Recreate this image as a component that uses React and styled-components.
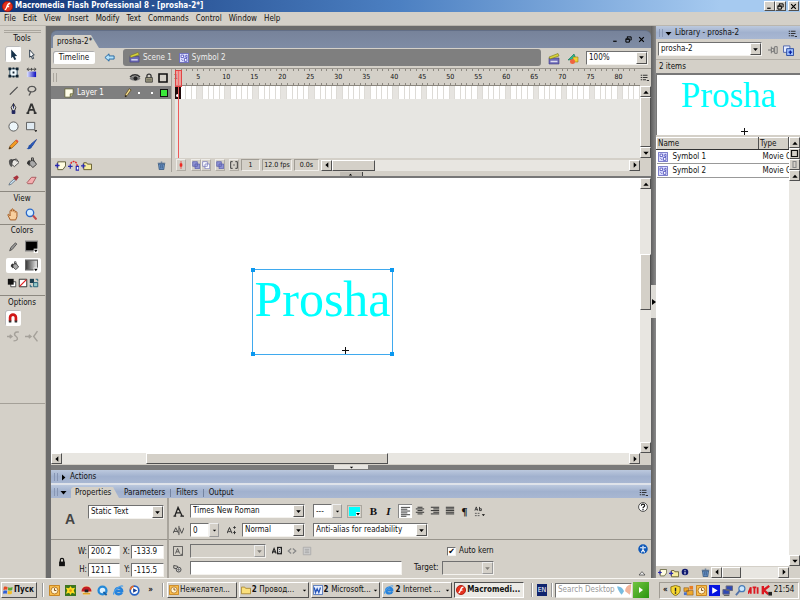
import React from "react";
import styled, { createGlobalStyle, css } from "styled-components";

const GlobalStyle = createGlobalStyle`
  * { box-sizing: border-box; }
  body { margin: 0; background: #d4d0c8; }
  body, button, input, select, table {
    font-family: "DejaVu Sans Condensed", "DejaVu Sans", sans-serif;
    font-size: 8px;
    line-height: 10px;
    color: #111;
  }
  button, input, select { margin: 0; padding: 0; border: 0; border-radius: 0; background: none; outline: 0; }
  svg { display: block; flex: none; }
  a { color: inherit; text-decoration: none; }
`;

const raised = css`
  background: #d4d0c8;
  border: 1px solid;
  border-color: #fff #505050 #505050 #fff;
`;
const sunken = css`
  border: 1px solid;
  border-color: #707070 #f4f2ee #f4f2ee #707070;
`;

const Page = styled.div`
  display: flex;
  flex-direction: column;
  min-height: 100vh;
  white-space: nowrap;
  background: #d4d0c8;
`;

/* ---------- window chrome ---------- */

const TitleBar = styled.header`
  display: flex;
  align-items: center;
  height: 12px;
  padding: 0 1px 0 2px;
  gap: 2px;
  color: #fff;
  background: linear-gradient(90deg, #123577, #4c80c2 50%, #a6caf0 90%);
`;
const TitleText = styled.h1`
  flex: 1;
  margin: 0;
  font-size: 8px;
  line-height: 12px;
  font-weight: 700;
`;
const WindowButtons = styled.div`
  display: flex;
  button:last-child { margin-left: 2px; }
`;
const WindowButton = styled.button`
  ${raised}
  width: 11px;
  height: 10px;
  display: grid;
  place-items: center;
`;
const MenuBar = styled.nav`
  display: flex;
  align-items: center;
  height: 14px;
  padding-left: 4px;
  gap: 7px;
  border-bottom: 1px solid #bab6ae;
`;

const Workspace = styled.div`
  flex: 1;
  display: flex;
  background: #6c6c6c;
`;

/* ---------- tools ---------- */

const Tools = styled.aside`
  width: 46px;
  padding-top: 4px;
  background: #d4d0c8;
  border-right: 1px solid #b8b4ac;
`;
const GripLine = styled.div`
  height: 3px;
  margin: 0 4px;
  border-top: 1px solid #aaa69e;
  border-bottom: 1px solid #aaa69e;
`;
const ToolHeading = styled.h2`
  margin: 0;
  padding-top: ${(p) => p.$pad || 1}px;
  height: ${(p) => (p.$pad || 1) + 11}px;
  width: 44px;
  font-size: 8px;
  line-height: 10px;
  font-weight: 400;
  text-align: center;
`;
const ToolGrid = styled.div`
  display: grid;
  grid-template-columns: 18px 18px;
  grid-auto-rows: ${(p) => p.$row || 18}px;
  padding: 0 0 ${(p) => p.$bottom || 2}px 4px;
  ${(p) => p.$rule && "border-bottom: 1px solid #8c8880;"}
`;
const ToolButton = styled.button`
  display: grid;
  place-items: center;
  margin: 1px;
  ${(p) => p.$on && "background: #fff; border-radius: 2px; box-shadow: inset 1px 1px #bbb;"}
`;
const FillRow = styled.div`
  grid-column: 1 / 3;
  display: grid;
  grid-template-columns: 17px 17px;
  margin: 2px -1px 2px 2px;
  background: #fff;
  border-radius: 2px;
  button { margin: 0; }
`;
const MiniRow = styled.div`
  display: flex;
  gap: 1px;
  padding: 2px 0 7px 7px;
  border-bottom: 1px solid #8c8880;
`;
const MiniButton = styled.button`
  width: 10px;
  height: 10px;
`;
const ToolsEnd = styled.div`
  height: 57px;
  border-bottom: 1px solid #a4a098;
`;

/* ---------- document ---------- */

const Center = styled.main`
  flex: 1;
  min-width: 0;
  display: flex;
  flex-direction: column;
  padding: 4px 0 0 5px;
`;
const DocHead = styled.div`
  display: flex;
  align-items: flex-end;
  height: 18px;
  padding: 0 5px 0 2px;
  border-radius: 6px 6px 0 0;
  border-top: 1px solid #626e86;
  background: linear-gradient(#77839a, #7f8ca5);
`;
const DocTab = styled.div`
  height: 13px;
  width: 46px;
  padding: 2px 0 0 4px;
  background: #d4d0c8;
  clip-path: polygon(0 2px, 2px 0, 38px 0, 46px 100%, 0 100%);
`;
const DocButtons = styled.div`
  display: flex;
  gap: 4px;
  margin-left: auto;
  padding-bottom: 4px;
`;
const PlainButton = styled.button`
  width: ${(p) => p.$w || 9}px;
  height: ${(p) => p.$h || 9}px;
  display: grid;
  place-items: center;
`;
const EditBar = styled.div`
  display: flex;
  align-items: center;
  gap: 7px;
  height: 21px;
  padding: 0 3px 1px 2px;
  background: #d4d0c8;
  border-bottom: 1px solid #9a968e;
`;
const TimelineButton = styled.button`
  width: 42px;
  height: 13px;
  background: #fff;
  border-radius: 2px;
  box-shadow: inset 1px 1px #aaa;
`;
const Crumbs = styled.nav`
  flex: 1;
  display: flex;
  align-items: center;
  gap: 7px;
  height: 17px;
  padding-left: 6px;
  border-radius: 3px;
  color: #eee;
  background: #7f7f7f;
  a { display: flex; align-items: center; gap: 3px; }
`;

const SelectBox = styled.span`
  ${sunken}
  display: flex;
  width: ${(p) => p.$w}px;
  height: 14px;
  background: ${(p) => (p.$off ? "#d4d0c8" : "#fff")};
  select {
    flex: 1;
    min-width: 0;
    padding-left: 2px;
    appearance: none;
  }
`;
const DropArrow = styled.span`
  ${raised}
  width: 11px;
  height: 12px;
  display: grid;
  place-items: center;
  ${(p) => p.$off && "border-color: #eee #999 #999 #eee; svg { opacity: 0.4; }"}
`;

/* ---------- timeline ---------- */

const Timeline = styled.section`
  display: flex;
  background: #d4d0c8;
`;
const Layers = styled.div`
  width: 121px;
  border-right: 1px solid #a6a29a;
`;
const LayerHead = styled.div`
  display: flex;
  align-items: center;
  justify-content: flex-end;
  gap: 3px;
  height: 17px;
  padding-right: 2px;
`;
const HeadGrip = styled.span`
  width: 4px;
  height: 9px;
  margin: 0 auto 0 2px;
  border: solid #aaa69e;
  border-width: 0 1px;
`;
const LayerRow = styled.div`
  display: flex;
  align-items: center;
  height: 13px;
  padding: 0 3px 0 13px;
  color: #fff;
  background: #7f7f7f;
  span { flex: 1; padding-left: 3px; }
`;
const Dot = styled.i`
  width: 2px;
  height: 2px;
  margin: 0 6px 0 5px;
  background: #fff;
`;
const Swatch = styled.i`
  width: 8px;
  height: 8px;
  margin-left: 1px;
  background: #3be73b;
  border: 1px solid #111;
`;
const Empty = styled.div`
  height: ${(p) => p.$h}px;
  background: #e7e6e2;
`;
const LayerFoot = styled.div`
  display: flex;
  align-items: center;
  gap: 1px;
  height: 14px;
  padding: 0 4px 0 3px;
  button:last-child { margin-left: auto; }
`;
const Frames = styled.div`
  flex: 1;
  min-width: 0;
  margin-left: 3px;
  position: relative;
`;
const Ruler = styled.div`
  display: grid;
  grid-template-columns: repeat(83, 1fr);
  height: 17px;
  border-bottom: 1px solid #8a867e;
`;
const Tick = styled.span`
  display: flex;
  justify-content: center;
  align-items: center;
  min-width: 0;
  padding-right: 4px;
  overflow: visible;
  font-size: 7px;
  background:
    linear-gradient(#8c8880, #8c8880) 0 0 / 1px 2px no-repeat,
    linear-gradient(#8c8880, #8c8880) 0 100% / 1px 2px no-repeat;
`;
const FrameRow = styled.div`
  display: grid;
  grid-template-columns: repeat(83, 1fr);
  height: 13px;
`;
const Frame = styled.span`
  background: ${(p) => (p.$fifth ? "#e6e4e0" : "#fff")};
  border-right: 1px solid #dddbd6;
`;
const KeyFrame = styled.span`
  display: grid;
  place-items: end center;
  background: #1d0909;
  padding-bottom: 2px;
  i { width: 3px; height: 3px; border-radius: 2px; background: #fff; }
`;
const Playhead = styled.div`
  position: absolute;
  left: 0;
  top: 1px;
  bottom: 14px;
  width: 7px;
  background: linear-gradient(#ee5a5a, #ee5a5a) 3px 0 / 1px 100% no-repeat;
  &::before {
    content: "";
    display: block;
    height: 15px;
    border: 1px solid #e24444;
    background: rgba(255, 120, 120, 0.55);
  }
`;
const FrameFoot = styled.div`
  display: flex;
  align-items: center;
  height: 14px;
`;
const FootButton = styled.button`
  width: 10px;
  height: 12px;
  margin-left: ${(p) => p.$gap || 0}px;
  display: grid;
  place-items: center;
  border: 1px solid;
  border-color: #eeece8 #b0aca4 #b0aca4 #eeece8;
`;
const Readout = styled.output`
  width: ${(p) => p.$w}px;
  height: 12px;
  margin-left: 2px;
  font-size: 7px;
  text-align: center;
  border: 1px solid;
  border-color: #a09c94 #f0eeea #f0eeea #a09c94;
`;
const Splitter = styled.div`
  display: flex;
  justify-content: center;
  align-items: flex-end;
  height: 6px;
  background: ${(p) => (p.$dark ? "#7a7a7a" : "#d4d0c8")};
  border-bottom: 2px solid #777;
  ${(p) => p.$dark && "height: 5px; border: 0; align-items: flex-start;"}
`;
const SplitterTab = styled.button`
  width: 34px;
  height: 4px;
  display: grid;
  place-items: center;
  background: #e6e4e0;
  ${(p) => !p.$wide && "width: 23px; border-right: 1px solid #444; background: #bfbbb3;"}
`;

/* ---------- scrollbars ---------- */

const Scroll = styled.div`
  display: flex;
  flex: ${(p) => (p.$fixed ? "none" : 1)};
  flex-direction: ${(p) => (p.$v ? "column" : "row")};
  ${(p) => (p.$v ? "width: 11px;" : "height: 11px;")}
  background: #e8e6e1;
`;
const ScrollArrow = styled.button`
  ${raised}
  width: 11px;
  height: 11px;
  flex: none;
  display: grid;
  place-items: center;
`;
const Track = styled.span`
  flex: ${(p) => p.$n};
`;
const Thumb = styled.span`
  ${raised}
  flex: ${(p) => p.$n};
`;

/* ---------- stage ---------- */

const StageGrid = styled.section`
  flex: 1;
  display: grid;
  grid-template-columns: 1fr 11px;
  grid-template-rows: 1fr 12px;
  background: #d4d0c8;
`;
const Stage = styled.div`
  position: relative;
  min-height: 220px;
  background: #fff;
  overflow: hidden;
`;
const Selected = styled.div`
  position: absolute;
  left: 201px;
  top: 91px;
  width: 141px;
  height: 86px;
  border: 1px solid #3fa9ee;
  font-family: "Liberation Serif", serif;
  font-size: 50px;
  line-height: 58px;
  text-align: center;
  color: #00ffff;
`;
const Handle = styled.i`
  position: absolute;
  width: 4px;
  height: 4px;
  background: #0a98f0;
  ${(p) => p.$x}: -2px;
  ${(p) => p.$y}: -2px;
`;
const Cross = styled.svg`
  position: absolute;
  right: ${(p) => p.$right}px;
  bottom: 0;
`;
const SideHandle = styled.div`
  width: 5px;
  display: flex;
  flex-direction: column;
  justify-content: center;
  padding-bottom: 1px;
  background: linear-gradient(90deg, #606060, #8a8a8a);
`;
const SideTab = styled.button`
  width: 5px;
  height: 33px;
  display: grid;
  place-items: center;
  background: #dedcd7;
`;

/* ---------- panels ---------- */

const PanelHead = styled.div`
  display: flex;
  align-items: center;
  gap: 1px;
  height: 13px;
  padding: 1px 3px 0;
  background: linear-gradient(#bcc9de, #a1b1ce 50%, #a8b7d2);
`;
const Grip = styled.span`
  width: 4px;
  height: 8px;
  border: solid #8796b4;
  border-width: 0 1px;
`;
const ActionsPanel = styled.section`
  border-bottom: 2px solid #dfe3ea;
`;
const TabList = styled.div`
  display: flex;
  align-self: flex-end;
  flex: 1;
`;
const PanelTitle = styled.div`
  flex: 1;
  padding-left: 1px;
`;
const TabButton = styled.button`
  height: 11px;
  padding: 0 5px;
  ${(p) =>
    p.$on &&
    `background: #d4d0c8; width: 48px; padding: 0 4px; margin-left: 2px; text-align: left;
    clip-path: polygon(0 2px, 2px 0, 42px 0, 48px 100%, 0 100%);`}
`;
const TabRule = styled.i`
  width: 1px;
  height: 8px;
  margin-top: 2px;
  background: #7483a0;
`;
const Properties = styled.div`
  display: grid;
  grid-template-columns: 118px 1fr;
  grid-template-rows: 42px 38px;
  background: #d4d0c8;
`;
const Cell = styled.div`
  display: flex;
  gap: 5px;
  ${(p) => p.$top && "border-bottom: 1px solid #98948c;"}
  ${(p) => p.$left && "border-right: 2px solid #a8a49c;"}
`;
const Kind = styled.strong`
  width: 32px;
  padding: 14px 0 0 14px;
  font-size: 14px;
  line-height: 14px;
  font-family: "Liberation Sans", sans-serif;
  color: #444;
`;
const TypeWrap = styled.div`
  padding-top: 7px;
`;
const Lines = styled.div`
  flex: 1;
  display: flex;
  flex-direction: column;
  gap: ${(p) => p.$gap}px;
  padding: ${(p) => p.$pad}px 0 0 4px;
`;
const Line = styled.div`
  display: flex;
  align-items: center;
  height: 14px;
  > svg:first-child { margin-right: 5px; }
`;
const Spacer = styled.span`
  width: ${(p) => p.$w}px;
`;
const PinColumn = styled.div`
  display: flex;
  flex-direction: column;
  justify-content: space-between;
  padding: 4px 3px 1px 0;
`;
const TextInput = styled.input`
  ${sunken}
  width: ${(p) => p.$w}px;
  height: 14px;
  padding-left: 2px;
  background: #fff;
`;
const StepButton = styled.button`
  ${raised}
  border-color: #eee #999 #999 #eee;
  width: 10px;
  height: 14px;
  display: grid;
  place-items: center;
`;
const FormatButton = styled.button`
  width: 15px;
  height: 14px;
  display: grid;
  place-items: center;
  font-family: "Liberation Serif", serif;
  font-size: 11px;
  line-height: 12px;
  font-weight: 700;
  font-style: ${(p) => (p.$italic ? "italic" : "normal")};
  ${(p) => p.$on && "width: 14px; background: #fff; box-shadow: inset 1px 1px #888;"}
`;
const ColorButton = styled.button`
  width: 15px;
  height: 13px;
  padding: 1px;
  border: 1px solid #aaa69e;
`;
const SizeFields = styled.div`
  display: grid;
  grid-template-columns: 11px 32px 11px 33px;
  row-gap: 3px;
  align-items: center;
  padding: 4px 0 0 5px;
  label { text-align: right; padding-right: 1px; }
`;
const Lock = styled.div`
  padding: 17px 0 0 6px;
`;
const CheckLabel = styled.label`
  display: flex;
  align-items: center;
  gap: 3px;
  input {
    ${sunken}
    appearance: none;
    display: grid;
    place-items: center;
    width: 9px;
    height: 9px;
    background: #fff;
  }
  input:checked::before {
    content: "✔";
    font: 700 8px/8px "DejaVu Sans", sans-serif;
    color: #000;
  }
`;

/* ---------- library ---------- */

const Library = styled.aside`
  width: 144px;
  display: flex;
  flex-direction: column;
  background: #d4d0c8;
`;
const LibraryPick = styled.div`
  display: flex;
  align-items: center;
  gap: 6px;
  height: 21px;
  padding-left: 2px;
  border-bottom: 1px solid #b4b0a8;
`;
const Count = styled.div`
  height: 13px;
  padding: 2px 3px;
`;
const Preview = styled.div`
  position: relative;
  height: 62px;
  border-top: 2px solid #777;
  border-left: 1px solid #777;
  background: #fff;
  font-family: "Liberation Serif", serif;
  font-size: 35px;
  line-height: 41px;
  text-align: center;
  color: #00ffff;
`;
const LibraryBody = styled.div`
  flex: 1;
  display: flex;
  margin-top: 2px;
`;
const TableWrap = styled.div`
  flex: 1;
  overflow: hidden;
  background: #fff;
`;
const ItemTable = styled.table`
  width: 100%;
  table-layout: fixed;
  border-collapse: collapse;
  th {
    ${raised}
    border-bottom-color: #333;
    height: 12px;
    padding: 0 1px;
    font-weight: 400;
    text-align: left;
  }
  th:last-child { width: 30px; }
  td {
    height: 14px;
    padding: 0 0 0 1px;
    border-bottom: 1px solid #999;
    overflow: hidden;
  }
  td:last-child { padding-left: 4px; }
`;
const ItemName = styled.span`
  display: flex;
  align-items: center;
  gap: 5px;
`;
const LibraryFoot = styled.div`
  display: flex;
  align-items: center;
  height: 12px;
  padding-left: 1px;
`;

/* ---------- taskbar ---------- */

const Taskbar = styled.footer`
  display: flex;
  align-items: center;
  height: 22px;
  padding: 1px 1px 0;
  border-top: 1px solid #f8f6f2;
  background: #d4d0c8;
`;
const StartButton = styled.button`
  ${raised}
  display: flex;
  align-items: center;
  gap: 1px;
  width: 36px;
  height: 16px;
  padding-left: 1px;
  font-weight: 700;
`;
const Divider = styled.i`
  width: 2px;
  height: 14px;
  margin: 0 ${(p) => p.$r || 3}px 0 ${(p) => p.$l || 3}px;
  border-left: 1px solid #999;
  border-right: 1px solid #fff;
`;
const Quick = styled.div`
  display: flex;
  gap: 4px;
  width: 109px;
  align-items: center;
  b { margin-left: auto; padding-right: 4px; }
`;
const TaskList = styled.div`
  flex: 1;
  min-width: 0;
  display: flex;
  gap: 2px;
`;
const Task = styled.button`
  ${raised}
  flex: 1;
  min-width: 0;
  display: flex;
  align-items: center;
  gap: 1px;
  height: 16px;
  padding: 0 1px;
  text-align: left;
  span { flex: 1; min-width: 0; overflow: hidden; }
  ${(p) =>
    p.$on &&
    "background: #ebe9e4; border-color: #505050 #fff #fff #505050; font-weight: 700;"}
`;
const Lang = styled.span`
  width: 10px;
  height: 12px;
  margin-left: 3px;
  color: #fff;
  background: #10246e;
  font-size: 7px;
  line-height: 12px;
  text-align: center;
`;
const Search = styled.label`
  ${sunken}
  display: flex;
  align-items: center;
  width: 77px;
  height: 15px;
  background: #fff;
  input { width: 61px; padding-left: 2px; }
  input::placeholder { color: #999; opacity: 1; }
`;
const Go = styled.button`
  width: 16px;
  height: 16px;
  margin: 0 10px 0 1px;
  display: grid;
  place-items: center;
  background: linear-gradient(135deg, #72c440, #2a9410);
`;
const Tray = styled.div`
  ${sunken}
  display: flex;
  align-items: center;
  gap: 2px;
  width: 140px;
  height: 17px;
  padding: 0 5px 0 3px;
  border-color: #a09c94 #fff #fff #a09c94;
  time { margin-left: auto; }
`;

/* ---------- drawings ---------- */

const shapes = {
  flash: (
    <>
      <circle cx="6" cy="6" r="5.5" fill="#e6321e" stroke="#a81408" />
      <path d="M9 2.5C6 2.5 5.8 5 5 7.2 4.5 8.8 4 9.4 3 9.5M5.3 6h2.5" stroke="#fff" strokeWidth="1.5" fill="none" />
    </>
  ),
  min: <path d="M2 9h6" stroke="#000" strokeWidth="2" />,
  restore: <path d="M4 1.5h6.5V7H9M4 1v3M1.5 5.5h6v5h-6zM1 5h7" stroke="#000" strokeWidth="1.7" fill="none" />,
  close: <path d="M2 2l8 8M10 2l-8 8" stroke="#000" strokeWidth="2" />,
  up: <path d="M6 4l4 4.5H2z" fill="#000" />,
  down: <path d="M6 8.5L2 4h8z" fill="#000" />,
  left: <path d="M3.5 6l4.5-4v8z" fill="#000" />,
  right: <path d="M8.5 6L4 2v8z" fill="#000" />,
  menu: <path d="M1 3h2M1 6h2M1 9h2M4 3h6M4 6h6M4 9h4M9 10h3" stroke="#222" strokeWidth="1.2" />,
  arrow: <path d="M3.500.5l6.500 7-2.800.3 1.800 3.400-2 .8L5.300 8.500 3.500 10z" fill="#17324a" />,
  subarrow: <path d="M4 1l5 5.6-2 .3L8.300 10.300l-1.200.6L5.600 7.600 4 9z" fill="#fff" stroke="#243446" />,
  free: (
    <>
      <path d="M2 2h8v8H2z" fill="#f4fbff" stroke="#27495e" />
      <path d="M.5.5h3v3h-3zM8.5.5h3v3h-3zM.5 8.5h3v3h-3zM8.5 8.5h3v3h-3zM5 .5h2v2H5zM5 9.500h2v2H5zM5 5h2v2H5z" fill="#102230" />
    </>
  ),
  gradTool: (
    <>
      <defs>
        <linearGradient id="blues">
          <stop offset="0" stopColor="#dfe3ff" />
          <stop offset="1" stopColor="#0a0cc0" />
        </linearGradient>
      </defs>
      <path d="M1 5h10v6H1z" fill="url(#blues)" />
      <path d="M1 2.500h10M3 1L1 2.500 3 4M9 1l2 1.500L9 4M6 1v3" stroke="#444" fill="none" />
    </>
  ),
  line: <path d="M2 10.500l8.500-8.500" stroke="#4e4e4e" strokeWidth="1.4" />,
  lasso: <path d="M3.500 7C1 5 2.500 1.500 6.500 1.500S12 5 9 6.800C7 8 4 7.500 3.500 6.500M4 7c2 1 0 2.500-.7 4.500" stroke="#555" strokeWidth="1.500" fill="none" />,
  pen: (
    <>
      <path d="M6 .5L3.500 5 5 9h2l1.500-4z" fill="#ddd" stroke="#222" />
      <path d="M6 1v5M4.500 8.500h3v3h-3z" stroke="#20255e" fill="#20255e" />
    </>
  ),
  type: <path d="M2 11L5.500 1.500h1L10 11M3 7.500h6M.5 11h3M8.500 11h3" stroke="#333" strokeWidth="1.900" fill="none" />,
  oval: <circle cx="6" cy="6" r="5" fill="#edf6fa" stroke="#555" />,
  rect: (
    <>
      <path d="M.5 1.500h9v8h-9z" fill="#dfeaf2" stroke="#555" />
      <path d="M9 10h3.500l-1.700 2z" fill="#000" />
    </>
  ),
  pencil: (
    <>
      <path d="M1 11l1.200-3.500 6-6 2.400 2.300-6.200 6z" fill="#f39a22" stroke="#8b5212" strokeWidth=".7" />
      <path d="M8 1.500L9.500.5l2 2-1 1.500z" fill="#e4563c" />
      <path d="M1 11l1-2.500L3.700 10z" fill="#222" />
    </>
  ),
  layerPencil: (
    <>
      <path d="M2.500 10.500L3 7.500 7.500.8l2.200 1.500L5 9z" fill="#f2dc8c" stroke="#5a451c" strokeWidth=".9" />
      <path d="M2.500 11L3 8.500 4.800 9.500z" fill="#111" />
    </>
  ),
  brush: (
    <>
      <path d="M11.500.5L5.500 5.500 7 7.500z" fill="#2c62d4" stroke="#1c3c8a" strokeWidth=".8" />
      <path d="M5.500 5.500L3 7c-.5 2-1 3-2.500 4C3.500 11.500 6 11 7 8z" fill="#2450a8" />
    </>
  ),
  ink: (
    <>
      <path d="M1 5c0-2 2-3.500 4-2.500l1 3.500-2 5C2 10 1 8 1 5z" fill="#555" />
      <path d="M5 4l4-2 3 4-5 4.500L4 8z" fill="#e8e6e2" stroke="#444" />
      <path d="M4 5c1-3 4-3 6 0" stroke="#333" fill="none" />
    </>
  ),
  bucket: (
    <>
      <path d="M1 7c0-2 2-4 3.500-3.500L4 10z" fill="#333" />
      <path d="M4 5l4-2 3.500 5-4 3.500L4 8z" fill="#aaa" stroke="#333" />
      <path d="M6 4V1h2v4" stroke="#333" fill="none" />
    </>
  ),
  dropper: (
    <>
      <path d="M1 11l1-2.500 4.500-4 1.500 1.500-4.500 4z" fill="#cbe3f4" stroke="#567" strokeWidth=".8" />
      <path d="M5.500 3L9 6.300 11.800 2.500 9.800.3z" fill="#a8323c" />
    </>
  ),
  eraser: <path d="M1 8.500L6 2.500h5L7 9.500H2z" fill="#f5aeb0" stroke="#a5585c" />,
  hand: <path d="M3 11L.8 6.500c0-1 1-1 2 .8V3c0-1.200 1.400-1.200 1.500 0V1.500c0-1 1.500-1 1.500 0V3c0-1.300 1.700-1.300 1.700 0v1c0-1 1.700-1 1.700.2V8L8 11z" fill="#f8cf9e" stroke="#a55c22" strokeWidth=".9" />,
  zoom: (
    <>
      <circle cx="5" cy="4.800" r="3.700" fill="#d2ecff" stroke="#2b68c8" strokeWidth="1.300" />
      <path d="M8 7.500l3.500 4" stroke="#c44848" strokeWidth="2" />
    </>
  ),
  stroke: <path d="M2 10.500l1.500-4L9 1l1.500 1.500L5 9z" fill="#999" stroke="#444" />,
  black: (
    <>
      <path d="M.5 1h11v9H.5z" fill="#000" stroke="#888" />
      <path d="M8 8h4v4H8z" fill="#fff" />
      <path d="M8.300 9h3.400L10 11.200z" fill="#000" />
    </>
  ),
  fade: (
    <>
      <defs>
        <linearGradient id="fade">
          <stop offset="0" stopColor="#333" />
          <stop offset="1" stopColor="#eee" />
        </linearGradient>
      </defs>
      <path d="M.5 1h11v9H.5z" fill="url(#fade)" stroke="#666" />
      <path d="M8 8h4v4H8z" fill="#fff" />
      <path d="M8.300 9h3.400L10 11.200z" fill="#000" />
    </>
  ),
  bw: (
    <>
      <path d="M4.500 4.500h6v6h-6z" fill="#fff" stroke="#333" />
      <path d="M1 1h7v7H1z" fill="#111" />
    </>
  ),
  none: (
    <>
      <path d="M1.500 1.500h9v9h-9z" fill="#fff" stroke="#111" />
      <path d="M2 10l8-8" stroke="#e02020" strokeWidth="1.500" />
    </>
  ),
  swap: (
    <>
      <path d="M1 1h5v5H1z" fill="#1c3e4e" />
      <path d="M5.500 5.500h5v5h-5zM8 1.500h2.500V4M4 10.500H1.500V8" fill="#9cc" stroke="#14506a" />
    </>
  ),
  magnet: (
    <>
      <path d="M2.500 10V5.500a3.500 3.500 0 017 0V10" stroke="#d01818" strokeWidth="3.200" fill="none" />
      <path d="M1 9h3v2.500H1zM8 9h3v2.500H8z" fill="#333" />
    </>
  ),
  smooth: <path d="M0 6h4M2.500 4.500L4.500 6 2.500 7.500M11 2c-4-1-5 2-3 3.500S11 10 6 10" stroke="#a5a19a" strokeWidth="1.300" fill="none" />,
  straight: <path d="M0 6h5M3.500 4.500L5.500 6l-2 1.500M11.500 1L8 6l3.500 4.500" stroke="#a5a19a" strokeWidth="1.300" fill="none" />,
  back: <path d="M1 6l4.500-4v2.300H11v3.400H5.500V10z" fill="#b4e2fa" stroke="#2064a0" />,
  scene: (
    <>
      <path d="M1 5h10v6H1z" fill="#6d6ab8" stroke="#3d3a80" strokeWidth=".6" />
      <path d="M1 4l9-3.500 1 2.500-9 3z" fill="#d6d23c" stroke="#77741a" strokeWidth=".6" />
      <path d="M2.500 8.500h7" stroke="#dde" strokeWidth="1.500" />
    </>
  ),
  symbol: (
    <>
      <path d="M.5.500h11v11H.5z" fill="#dcdeff" stroke="#5c5ebc" />
      <path d="M2.500 2.500h3v3h-3zM7 4l2.500-1.500V6zM6.500 6.500h3V10h-3zM3 7.500l2 2" fill="#fff" stroke="#4a4cb8" />
    </>
  ),
  shapesIcon: (
    <>
      <path d="M1 7l6-6 2 5z" fill="#27b892" stroke="#126c52" strokeWidth=".6" />
      <path d="M6 4h5v5H6z" fill="#f0d230" stroke="#977d18" strokeWidth=".6" />
      <circle cx="5.500" cy="8.500" r="2.500" fill="#ef6340" />
    </>
  ),
  eye: (
    <>
      <path d="M.5 6.500C3 3 9 3 11.500 6.500 9 9.500 3 9.500.5 6.500z" fill="#777" />
      <circle cx="6.500" cy="6.500" r="2" fill="#222" />
      <path d="M1 5c3-3 7-3 10 0" stroke="#333" strokeWidth="1.300" fill="none" />
    </>
  ),
  padlock: (
    <>
      <path d="M3.500 6V3.500c0-3 5-3 5 0V6" stroke="#333" strokeWidth="1.500" fill="none" />
      <path d="M2 5.500h8V11H2z" fill="#b9b48e" stroke="#333" />
      <path d="M3 7.500h6M3 9.500h6" stroke="#555" />
    </>
  ),
  lockBlack: (
    <>
      <path d="M4 6V3.500c0-2.500 4-2.500 4 0V6" stroke="#111" strokeWidth="1.500" fill="none" />
      <path d="M2.500 5.500h7V11h-7z" fill="#111" />
    </>
  ),
  square: <path d="M2 2h8v8H2z" fill="none" stroke="#111" strokeWidth="1.600" />,
  sheet: (
    <>
      <path d="M1 1h10v6l-3.500 4H1z" fill="#fffde8" stroke="#5d5b34" />
      <path d="M11 7H7.500v4" fill="#c8c694" stroke="#5d5b34" />
    </>
  ),
  addLayer: (
    <>
      <path d="M3 2h8.500v4.500l-3 4H3z" fill="#fffde0" stroke="#55552f" />
      <path d="M0 6h5M2.500 3.500v5" stroke="#2a2ab0" strokeWidth="1.400" />
    </>
  ),
  guide: (
    <>
      <path d="M3 4c2-4 7-3 7 3" stroke="#e02828" strokeWidth="1.500" strokeDasharray="2 1" fill="none" />
      <path d="M0 7h5M2.500 4.500v5M9 7h3v4H9z" stroke="#2a2ab0" fill="#fff" strokeWidth="1.300" />
    </>
  ),
  folderAdd: (
    <>
      <path d="M3 3h3l1 1.500h4.500V10.500H3z" fill="#f6eca0" stroke="#5e5728" />
      <path d="M0 6.500h5M2.500 4v5" stroke="#2a2ab0" strokeWidth="1.400" />
    </>
  ),
  trash: (
    <>
      <path d="M2 4h8l-1 7.500H3z" fill="#6f98cc" stroke="#2b4c72" />
      <path d="M1 3h10M5 1.500h2M5 5v5M7 5v5" stroke="#3a5c88" strokeWidth="1.200" />
    </>
  ),
  marker: <path d="M6 0v12M4.500 4h3v4h-3z" stroke="#ee2a22" fill="#ee2a22" />,
  onion: <path d="M1 1h7v7H1zM4.500 4.500h7v7h-7z" fill="#8e92d4" stroke="#5256a8" />,
  onionLine: <path d="M1 1h7v7H1zM4.500 4.500h7v7h-7z" fill="#fff" stroke="#6a6eb8" />,
  brackets: <path d="M4 1H1v10h3M8 1h3v10H8M5 6h2" stroke="#333" strokeWidth="1.400" fill="none" />,
  kern: <path d="M0 9l3-6 3 6M1 7h4M6.500 1v10M7 3l2.500 6L12 3" stroke="#444" fill="none" />,
  pos: <path d="M0 10l3-7 3 7M1.500 8h3M9 1.500v3M7.500 3h3M9 7v4M7.500 9h3" stroke="#333" strokeWidth="1.200" fill="none" />,
  fontA: <path d="M2 11L5.500 1.500 10 11M3.500 7.500h5M.5 11h3M8 11h4" stroke="#222" strokeWidth="1.400" fill="none" />,
  alignL: <path d="M1 1.500h10M1 3.500h7M1 5.500h10M1 7.500h7M1 9.500h10M1 11.200h6" stroke="#333" />,
  alignC: <path d="M3 1.500h6M1 3.500h10M3 5.500h6M1 7.500h10M3 9.500h6" stroke="#333" strokeWidth="1.200" />,
  alignR: <path d="M1 1.500h10M4 3.500h7M1 5.500h10M4 7.500h7M1 9.500h10" stroke="#333" strokeWidth="1.200" />,
  alignJ: <path d="M1 1.500h10M1 3.500h10M1 5.500h10M1 7.500h10M1 9.500h10" stroke="#333" strokeWidth="1.200" />,
  format: (
    <>
      <path d="M1 5l1.500-4L4 5M2 4h2M6 1v4h2V3H6" stroke="#333" fill="none" />
      <path d="M1 8h6M1 10.500h6" stroke="#555" strokeDasharray="2 1" />
      <path d="M8.500 9H12l-1.800 2z" fill="#000" />
    </>
  ),
  selectable: <path d="M.5.500h11v11H.5zM3 9l2.500-6L8 9M4 7h3M9 10h2" fill="none" stroke="#444" />,
  link: (
    <>
      <path d="M1 2l5 1v3.500L1 5.500z" fill="none" stroke="#444" strokeWidth="1.200" />
      <circle cx="7.500" cy="7.500" r="3.200" fill="#ddd" stroke="#444" strokeWidth="1.200" />
      <path d="M5 7.500h5M7.500 5v5" stroke="#666" />
    </>
  ),
  abc: (
    <>
      <path d="M6 1h6v9H6z" fill="#222" />
      <path d="M0 9l2.500-6L5 9M1 7h3" stroke="#222" strokeWidth="1.300" fill="none" />
      <path d="M8 3h2v5H8zM8 5.500h2" stroke="#fff" fill="none" />
    </>
  ),
  html: <path d="M5 3L1.500 6 5 9M7 3l3.500 3L7 9" stroke="#888" strokeWidth="1.500" fill="none" />,
  border: <path d="M1.500 1.500h9v9h-9zM4 4h4v1H4zM4 7h4v1H4z" stroke="#aaa" fill="#ccc" />,
  narrow: <path d="M4 2h4v8H4z" stroke="#888" strokeWidth="1.400" fill="none" />,
  help: (
    <>
      <circle cx="6" cy="6" r="5.300" fill="#fff" stroke="#333" />
      <path d="M4 4.500c0-2.500 4-2.500 4 0C8 6 6 5.500 6 7.500M6 8.500v1.300" stroke="#111" strokeWidth="1.400" fill="none" />
    </>
  ),
  access: (
    <>
      <circle cx="6" cy="6" r="5.700" fill="#0f58b8" />
      <path d="M6 2v1.500M2.500 4.500h7M6 4v3l-2 3M6 7l2 3" stroke="#fff" strokeWidth="1.400" fill="none" />
    </>
  ),
  expand: <path d="M6 4l4.500 5h-9z" fill="#eee" stroke="#333" />,
  pin: <path d="M0 6h4M4 2v8M4 4h3v4H4M8 2v8h3V2z" stroke="#777" strokeWidth="1.200" fill="none" />,
  newLib: (
    <>
      <path d="M.5 1h7v7h-7z" fill="#e6edff" stroke="#4960a8" />
      <path d="M4 4h7.500v7.500H4z" fill="#9fc1ff" stroke="#24449c" />
      <path d="M6 7.800h4M8 6v4" stroke="#0820a0" strokeWidth="1.500" />
    </>
  ),
  info: (
    <>
      <circle cx="6" cy="6" r="5" fill="#101a70" />
      <path d="M6 3v1.300M6 5.500v4" stroke="#fff" strokeWidth="1.500" />
    </>
  ),
  windows: (
    <>
      <path d="M1 2.500C2.500 1.500 4 2 5.500 2.500L5 6C3.500 5 2 5.500.5 6z" fill="#e64b20" />
      <path d="M6.200 2.800C8 3.500 9.500 3.200 11.500 2.500L11 6c-2 1-3.500.5-5 .2z" fill="#56a832" />
      <path d="M.5 7c1.500-.8 3-.6 4.500 0l-.5 3.500C3 10 1.500 10 0 10.500z" fill="#2f5fd8" />
      <path d="M5.800 7.200c1.500.5 3 .6 5 0L10.500 10.500c-2 1-3.500.7-5 .2z" fill="#f4bd20" />
    </>
  ),
  clock: (
    <>
      <path d="M.5.500h11v11H.5z" fill="#f9bd4b" stroke="#c47e16" />
      <circle cx="6" cy="6" r="3.800" fill="#fff2cf" stroke="#b37422" />
      <path d="M6 3.500V6h2" stroke="#764410" fill="none" />
    </>
  ),
  flower: (
    <>
      <path d="M0 0h12v12H0z" fill="#3c751f" />
      <path d="M6 1l1.500 2.500L11 3 9.500 6 11 9.500 7.500 8.500 6 11 4.500 8.500 1 9.500 2.500 6 1 3l3.500.5z" fill="#ffdd20" />
      <circle cx="6" cy="6" r="1.500" fill="#e89a10" />
    </>
  ),
  ball: (
    <>
      <circle cx="6" cy="6" r="5.500" fill="#f0d8a8" />
      <path d="M.5 7a5.500 5.500 0 0111 0z" fill="#c41d24" />
      <path d="M4 5h4v3H4z" fill="#252020" />
      <path d="M2 9.500h8" stroke="#e0a32a" strokeWidth="1.500" />
    </>
  ),
  quicktime: (
    <>
      <circle cx="6" cy="6" r="4.300" fill="#dcf1ff" stroke="#2489d8" strokeWidth="2.500" />
      <path d="M7 7.500l3.500 3.500" stroke="#1560a8" strokeWidth="2" />
    </>
  ),
  ie: (
    <>
      <path d="M9.800 8.200C8.500 11 2.500 11 2.500 6.500S10 2 10 6.500H4" stroke="#2582dc" strokeWidth="2.600" fill="none" />
      <path d="M1 10.500C-1 8 8-1 11 1.500" stroke="#4b9fe8" strokeWidth="1.300" fill="none" />
    </>
  ),
  media: (
    <>
      <circle cx="6" cy="6" r="4.700" fill="#fff" stroke="#2463c8" strokeWidth="1.800" />
      <path d="M1.500 5A5 5 0 015 1.300" stroke="#ed6c22" strokeWidth="2" fill="none" />
      <path d="M4.500 3.500v5L9 6z" fill="#173d90" />
    </>
  ),
  folder: <path d="M.5 2.500h4l1 1.500h6v6.500H.5z" fill="#fbe07c" stroke="#a7842c" />,
  word: (
    <>
      <path d="M.5.500h11v11H.5z" fill="#e7efff" stroke="#3f68b4" />
      <path d="M1.500 3l1.500 6 2-4.500L7 9l2-6" stroke="#2454b8" strokeWidth="1.500" fill="none" />
    </>
  ),
  butterfly: (
    <>
      <path d="M0 3c4 0 5 2 6 4l-2 3C2 8 1 6 0 3z" fill="#78bce0" />
      <path d="M12 1C8 2 7 5 7 7l4 3c1-3 1-6 1-9z" fill="#f2b49a" />
    </>
  ),
  shield: (
    <>
      <path d="M6 .5L11 2v4.500C10.500 9 8 11 6 11.500 4 11 1.500 9 1 6.500V2z" fill="#f8d830" stroke="#867018" />
      <path d="M6 3v4M6 8v1.500" stroke="#222" strokeWidth="1.500" />
    </>
  ),
  people: (
    <>
      <path d="M1 3h5v4H1zM4 6h7v5H4z" fill="#eea82d" stroke="#855418" strokeWidth=".6" />
      <path d="M7 1h4v4H7z" fill="#e77d24" />
      <path d="M1 8h3v3H1z" fill="#4a72cc" />
    </>
  ),
  play: (
    <>
      <path d="M0 0h12v12H0z" fill="#0614e0" />
      <path d="M3.500 2.500v7L9.500 6z" fill="#fff" />
    </>
  ),
  network: (
    <>
      <path d="M4.500 1h7v5h-7zM1 5h7v5H1z" fill="#3049b4" stroke="#667" />
      <path d="M2 11.500h6" stroke="#555" />
    </>
  ),
  glass: (
    <>
      <circle cx="7.500" cy="4" r="3.300" fill="#cbe8ff" stroke="#477bb8" strokeWidth="1.300" />
      <path d="M5 6.500L1 11" stroke="#5474aa" strokeWidth="2" />
    </>
  ),
  ati: <path d="M0 9.500L3 2.500v7M1.500 7H3M5 2.500h4M7 2.500v7M10.500 2.500v7" stroke="#dc1820" strokeWidth="2" fill="none" />,
  kasp: (
    <>
      <path d="M2 1v9M9 1L3 5.500 8 10" stroke="#dc1820" strokeWidth="2.600" fill="none" />
      <path d="M8 7.500h4v4H8z" fill="#222" />
    </>
  ),
};

function Icon({ name, size = 11 }) {
  return (
    <svg width={size} height={size} viewBox="0 0 12 12" aria-hidden="true">
      {shapes[name]}
    </svg>
  );
}

const Plus = ({ right }) => (
  <Cross $right={right} width="7" height="7" viewBox="0 0 7 7" aria-hidden="true">
    <path d="M3.500 0v7M0 3.500h7" stroke="#111" />
  </Cross>
);

function Select({ label, value, width, disabled, id }) {
  return (
    <SelectBox $w={width} $off={disabled}>
      <select id={id} aria-label={label} defaultValue={value} disabled={disabled}>
        <option>{value}</option>
      </select>
      <DropArrow $off={disabled}>
        <Icon name="down" size={7} />
      </DropArrow>
    </SelectBox>
  );
}

function ScrollBar({ vertical, parts, fixed }) {
  const [before, thumb, after] = parts;
  return (
    <Scroll $v={vertical} $fixed={fixed}>
      <ScrollArrow aria-label="Scroll back">
        <Icon name={vertical ? "up" : "left"} size={8} />
      </ScrollArrow>
      {before > 0 && <Track $n={before} />}
      {thumb > 0 && <Thumb $n={thumb} />}
      {after > 0 && <Track $n={after} />}
      <ScrollArrow aria-label="Scroll forward">
        <Icon name={vertical ? "down" : "right"} size={8} />
      </ScrollArrow>
    </Scroll>
  );
}

const menus = ["File", "Edit", "View", "Insert", "Modify", "Text", "Commands", "Control", "Window", "Help"];
const tools = [
  "arrow", "subarrow", "free", "gradTool", "line", "lasso", "pen", "type",
  "oval", "rect", "pencil", "brush", "ink", "bucket", "dropper", "eraser",
];
const frames = Array.from({ length: 83 }, (_, i) => i + 1);
const tasks = [
  { icon: "clock", text: "Нежелател..." },
  { icon: "folder", count: 2, text: "Провод...", more: true },
  { icon: "word", count: 2, text: "Microsoft...", more: true },
  { icon: "ie", count: 2, text: "Internet ...", more: true },
  { icon: "flash", text: "Macromedi...", on: true },
];
const tray = ["shield", "people", "clock", "play", "network", "glass", "ati", "kasp"];

function ToolPanel() {
  return (
    <Tools>
      <GripLine />
      <ToolHeading>Tools</ToolHeading>
      <ToolGrid $rule>
        {tools.map((name, i) => (
          <ToolButton key={name} $on={i === 0} aria-label={name}>
            <Icon name={name} />
          </ToolButton>
        ))}
      </ToolGrid>
      <ToolHeading $pad={2}>View</ToolHeading>
      <ToolGrid $rule $bottom={1}>
        <ToolButton aria-label="Hand"><Icon name="hand" size={13} /></ToolButton>
        <ToolButton aria-label="Zoom"><Icon name="zoom" size={12} /></ToolButton>
      </ToolGrid>
      <ToolHeading>Colors</ToolHeading>
      <ToolGrid $row={19} $bottom={1}>
        <ToolButton aria-label="Stroke"><Icon name="stroke" size={10} /></ToolButton>
        <ToolButton aria-label="Stroke color"><Icon name="black" size={13} /></ToolButton>
        <FillRow>
          <ToolButton aria-label="Fill"><Icon name="bucket" size={9} /></ToolButton>
          <ToolButton aria-label="Fill color"><Icon name="fade" size={13} /></ToolButton>
        </FillRow>
      </ToolGrid>
      <MiniRow>
        {["bw", "none", "swap"].map((n) => (
          <MiniButton key={n} aria-label={n}><Icon name={n} size={10} /></MiniButton>
        ))}
      </MiniRow>
      <ToolHeading $pad={2}>Options</ToolHeading>
      <ToolGrid>
        <ToolButton $on aria-label="Snap to objects"><Icon name="magnet" size={10} /></ToolButton>
        <span />
        <ToolButton aria-label="Smooth"><Icon name="smooth" size={13} /></ToolButton>
        <ToolButton aria-label="Straighten"><Icon name="straight" size={13} /></ToolButton>
      </ToolGrid>
      <ToolsEnd />
    </Tools>
  );
}

function TimelinePanel() {
  return (
    <Timeline>
      <Layers>
        <LayerHead>
          <HeadGrip />
          <Icon name="eye" size={12} />
          <Icon name="padlock" size={10} />
          <Icon name="square" size={12} />
        </LayerHead>
        <LayerRow>
          <Icon name="sheet" size={10} />
          <span>Layer 1</span>
          <Icon name="layerPencil" size={10} />
          <Dot />
          <Dot />
          <Swatch />
        </LayerRow>
        <Empty $h={59} />
        <LayerFoot>
          {["addLayer", "guide", "folderAdd", "trash"].map((n) => (
            <PlainButton key={n} $w={12} $h={11} aria-label={n}><Icon name={n} size={n === "trash" ? 9 : 11} /></PlainButton>
          ))}
        </LayerFoot>
      </Layers>
      <Frames>
        <Ruler>
          {frames.map((n) => (
            <Tick key={n}>{n === 1 || n % 5 === 0 ? n : ""}</Tick>
          ))}
        </Ruler>
        <FrameRow>
          <KeyFrame><i /></KeyFrame>
          {frames.slice(1).map((n) => (
            <Frame key={n} $fifth={n % 5 === 0} />
          ))}
        </FrameRow>
        <Empty $h={59} />
        <Playhead />
        <FrameFoot>
          <FootButton $gap={1} aria-label="Center frame"><Icon name="marker" size={8} /></FootButton>
          <FootButton $gap={5} aria-label="Onion skin"><Icon name="onion" size={8} /></FootButton>
          <FootButton aria-label="Onion skin outlines"><Icon name="onionLine" size={8} /></FootButton>
          <FootButton $gap={4} aria-label="Edit multiple frames"><Icon name="onion" size={8} /></FootButton>
          <FootButton $gap={4} aria-label="Modify onion markers"><Icon name="brackets" size={8} /></FootButton>
          <Readout $w={19}>1</Readout>
          <Readout $w={30}>12.0 fps</Readout>
          <Readout $w={25}>0.0s</Readout>
          <Spacer $w={2} />
          <ScrollBar parts={[0, 41, 256]} />
        </FrameFoot>
      </Frames>
      <div>
        <LayerHead><Icon name="menu" size={9} /></LayerHead>
        <Scroll $v $fixed>
          <ScrollArrow aria-label="Scroll up"><Icon name="up" size={8} /></ScrollArrow>
          <Thumb $n="0 0 50px" />
          <ScrollArrow aria-label="Scroll down"><Icon name="down" size={8} /></ScrollArrow>
        </Scroll>
      </div>
    </Timeline>
  );
}

function PropertiesPanel() {
  return (
    <section>
      <PanelHead>
        <Grip />
        <Icon name="down" size={9} />
        <TabList>
          <TabButton $on>Properties</TabButton>
          <TabButton>Parameters</TabButton>
          <TabRule />
          <TabButton>Filters</TabButton>
          <TabRule />
          <TabButton>Output</TabButton>
        </TabList>
        <Icon name="menu" size={9} />
      </PanelHead>
      <Properties>
        <Cell $top $left>
          <Kind>A</Kind>
          <TypeWrap><Select label="Text type" value="Static Text" width={76} /></TypeWrap>
        </Cell>
        <Cell $top>
          <Lines $pad={6} $gap={5}>
            <Line>
              <Icon name="fontA" />
              <Spacer $w={1} />
              <Select label="Font" value="Times New Roman" width={115} />
              <Spacer $w={8} />
              <TextInput $w={19} aria-label="Font size" defaultValue="---" />
              <StepButton aria-label="Choose size"><Icon name="down" size={5} /></StepButton>
              <Spacer $w={5} />
              <ColorButton aria-label="Text color">
                <svg width="11" height="9" viewBox="0 0 11 9">
                  <path d="M0 0h11v9H0z" fill="#0ff" />
                  <path d="M7 5h4v4H7z" fill="#fff" />
                  <path d="M7 6h4L9 8.500z" fill="#000" />
                </svg>
              </ColorButton>
              <Spacer $w={4} />
              <FormatButton>B</FormatButton>
              <FormatButton $italic>I</FormatButton>
              <Spacer $w={2} />
              <FormatButton $on aria-label="Align left"><Icon name="alignL" /></FormatButton>
              <FormatButton aria-label="Align center"><Icon name="alignC" size={10} /></FormatButton>
              <FormatButton aria-label="Align right"><Icon name="alignR" size={10} /></FormatButton>
              <FormatButton aria-label="Justify"><Icon name="alignJ" size={10} /></FormatButton>
              <FormatButton>¶</FormatButton>
              <FormatButton aria-label="Edit format"><Icon name="format" /></FormatButton>
            </Line>
            <Line>
              <Icon name="kern" />
              <Spacer $w={1} />
              <TextInput $w={19} aria-label="Letter spacing" defaultValue="0" />
              <StepButton aria-label="Choose spacing"><Icon name="down" size={5} /></StepButton>
              <Spacer $w={8} />
              <Icon name="pos" size={10} />
              <Spacer $w={5} />
              <Select label="Character position" value="Normal" width={63} />
              <Spacer $w={8} />
              <Select label="Font rendering" value="Anti-alias for readability" width={115} />
            </Line>
          </Lines>
          <PinColumn><Icon name="help" size={10} /></PinColumn>
        </Cell>
        <Cell $left>
          <Lock><Icon name="lockBlack" size={10} /></Lock>
          <SizeFields>
            <label htmlFor="w">W:</label>
            <TextInput id="w" $w={32} defaultValue="200.2" />
            <label htmlFor="x">X:</label>
            <TextInput id="x" $w={33} defaultValue="-133.9" />
            <label htmlFor="h">H:</label>
            <TextInput id="h" $w={32} defaultValue="121.1" />
            <label htmlFor="y">Y:</label>
            <TextInput id="y" $w={33} defaultValue="-115.5" />
          </SizeFields>
        </Cell>
        <Cell>
          <Lines $pad={4} $gap={3}>
            <Line>
              <Icon name="selectable" size={10} />
              <Spacer $w={2} />
              <Select label="Line type" value="" width={76} disabled />
              <Spacer $w={6} />
              <Icon name="abc" size={10} />
              <Spacer $w={5} />
              <Icon name="html" size={10} />
              <Spacer $w={5} />
              <Icon name="border" size={10} />
              <Spacer $w={135} />
              <CheckLabel><input type="checkbox" defaultChecked />Auto kern</CheckLabel>
            </Line>
            <Line>
              <Icon name="link" size={9} />
              <Spacer $w={3} />
              <TextInput $w={212} aria-label="URL link" />
              <Spacer $w={12} />
              <label htmlFor="target">Target:</label>
              <Spacer $w={3} />
              <Select id="target" value="" width={52} disabled />
            </Line>
          </Lines>
          <PinColumn>
            <Icon name="access" size={10} />
            <Icon name="expand" size={8} />
          </PinColumn>
        </Cell>
      </Properties>
    </section>
  );
}

function LibraryPanel() {
  return (
    <Library>
      <PanelHead>
        <Grip />
        <Icon name="down" size={9} />
        <PanelTitle>Library - prosha-2</PanelTitle>
        <Icon name="menu" size={9} />
      </PanelHead>
      <LibraryPick>
        <Select label="Library document" value="prosha-2" width={104} />
        <PlainButton aria-label="Pin library"><Icon name="pin" size={10} /></PlainButton>
        <PlainButton $w={11} aria-label="New library panel"><Icon name="newLib" /></PlainButton>
      </LibraryPick>
      <Count>2 items</Count>
      <Preview>
        Prosha
        <Plus right={52} />
      </Preview>
      <LibraryBody>
        <TableWrap>
          <ItemTable>
            <thead>
              <tr><th>Name</th><th>Type</th></tr>
            </thead>
            <tbody>
              {["Symbol 1", "Symbol 2"].map((s) => (
                <tr key={s}>
                  <td><ItemName><Icon name="symbol" size={10} />{s}</ItemName></td>
                  <td>Movie Clip</td>
                </tr>
              ))}
            </tbody>
          </ItemTable>
        </TableWrap>
        <Scroll $v $fixed>
          <ScrollArrow aria-label="Sort"><Icon name="up" size={8} /></ScrollArrow>
          <ScrollArrow aria-label="Wide view"><Icon name="square" size={9} /></ScrollArrow>
          <ScrollArrow aria-label="Narrow view"><Icon name="narrow" size={9} /></ScrollArrow>
          <ScrollBar vertical parts={[0, 0, 1]} />
        </Scroll>
      </LibraryBody>
      <LibraryFoot>
        <PlainButton $w={11} aria-label="New symbol"><Icon name="addLayer" size={9} /></PlainButton>
        <PlainButton $w={12} aria-label="New folder"><Icon name="folderAdd" size={10} /></PlainButton>
        <PlainButton $w={9} aria-label="Item properties"><Icon name="info" size={8} /></PlainButton>
        <Spacer $w={11} />
        <PlainButton $w={11} aria-label="Delete item"><Icon name="trash" size={9} /></PlainButton>
        <ScrollBar parts={[0, 18, 38]} />
        <Spacer $w={11} />
      </LibraryFoot>
    </Library>
  );
}

function WindowsTaskbar() {
  return (
    <Taskbar>
      <StartButton><Icon name="windows" size={10} />Пуск</StartButton>
      <Divider $l={5} $r={4} />
      <Quick>
        {["clock", "flower", "ball", "quicktime", "ie", "media"].map((n) => (
          <PlainButton key={n} $w={12} $h={12} aria-label={n}><Icon name={n} /></PlainButton>
        ))}
        <b>»</b>
      </Quick>
      <Divider $l={5} $r={3} />
      <TaskList>
        {tasks.map((t) => (
          <Task key={t.icon} $on={t.on}>
            <Icon name={t.icon} size={10} />
            <span>{t.count && <b>{t.count} </b>}{t.text}</span>
            {t.more && <Icon name="down" size={5} />}
          </Task>
        ))}
      </TaskList>
      <Divider $l={7} $r={1} />
      <Lang>EN</Lang>
      <Divider $l={4} $r={2} />
      <Search>
        <input placeholder="Search Desktop" aria-label="Search Desktop" />
        <Icon name="butterfly" size={14} />
      </Search>
      <Go aria-label="Search">
        <svg width="6" height="6" viewBox="0 0 6 6"><path d="M1 0l4 3-4 3z" fill="#fff" /></svg>
      </Go>
      <Tray>
        <b>«</b>
        {tray.map((n) => <Icon key={n} name={n} size={11} />)}
        <time>21:54</time>
      </Tray>
    </Taskbar>
  );
}

function App() {
  return (
    <Page>
      <GlobalStyle />
      <TitleBar>
        <Icon name="flash" size={11} />
        <TitleText>Macromedia Flash Professional 8 - [prosha-2*]</TitleText>
        <WindowButtons>
          <WindowButton aria-label="Minimize"><Icon name="min" size={7} /></WindowButton>
          <WindowButton aria-label="Restore"><Icon name="restore" size={7} /></WindowButton>
          <WindowButton aria-label="Close"><Icon name="close" size={7} /></WindowButton>
        </WindowButtons>
      </TitleBar>
      <MenuBar>
        {menus.map((m) => <a key={m} href={"#" + m}>{m}</a>)}
      </MenuBar>
      <Workspace>
        <ToolPanel />
        <Center>
          <DocHead>
            <DocTab>prosha-2*</DocTab>
            <DocButtons>
              <PlainButton aria-label="Minimize document"><Icon name="min" size={7} /></PlainButton>
              <PlainButton aria-label="Restore document"><Icon name="restore" size={7} /></PlainButton>
              <PlainButton aria-label="Close document"><Icon name="close" size={7} /></PlainButton>
            </DocButtons>
          </DocHead>
          <EditBar>
            <TimelineButton>Timeline</TimelineButton>
            <PlainButton $w={14} $h={12} aria-label="Back"><Icon name="back" /></PlainButton>
            <Crumbs>
              <a href="#scene"><Icon name="scene" />Scene 1</a>
              <a href="#symbol"><Icon name="symbol" size={10} />Symbol 2</a>
            </Crumbs>
            <PlainButton $w={12} aria-label="Edit scene"><Icon name="scene" size={12} /></PlainButton>
            <PlainButton $w={12} aria-label="Edit symbols"><Icon name="shapesIcon" size={12} /></PlainButton>
            <Select label="Zoom" value="100%" width={62} />
          </EditBar>
          <TimelinePanel />
          <Splitter><SplitterTab aria-label="Collapse timeline"><Icon name="up" size={5} /></SplitterTab></Splitter>
          <StageGrid>
            <Stage>
              <Selected>
                Prosha
                <Handle $x="left" $y="top" />
                <Handle $x="right" $y="top" />
                <Handle $x="left" $y="bottom" />
                <Handle $x="right" $y="bottom" />
                <Plus right={43} />
              </Selected>
            </Stage>
            <ScrollBar vertical parts={[66, 55, 134]} />
            <ScrollBar parts={[84, 241, 241]} />
          </StageGrid>
          <Splitter $dark><SplitterTab $wide aria-label="Collapse panels"><Icon name="down" size={5} /></SplitterTab></Splitter>
          <ActionsPanel>
            <PanelHead><Grip /><Icon name="right" size={9} /><PanelTitle>Actions</PanelTitle></PanelHead>
          </ActionsPanel>
          <PropertiesPanel />
        </Center>
        <SideHandle>
          <SideTab aria-label="Collapse side panels">
            <svg width="4" height="6" viewBox="0 0 4 6"><path d="M0 0l4 3-4 3z" fill="#000" /></svg>
          </SideTab>
        </SideHandle>
        <LibraryPanel />
      </Workspace>
      <WindowsTaskbar />
    </Page>
  );
}

export default App;
